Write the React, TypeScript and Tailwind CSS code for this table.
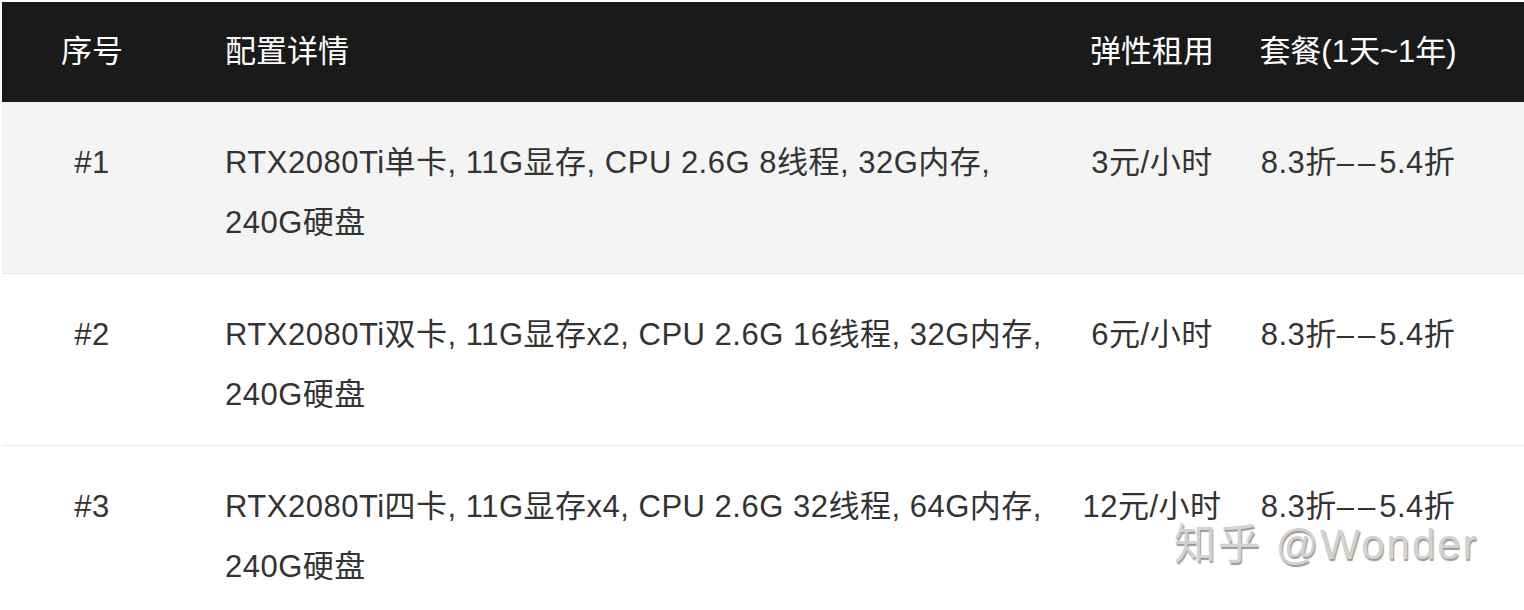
import React from "react";

const rows = [
  {
    id: "#1",
    l1: "RTX2080Ti单卡, 11G显存, CPU 2.6G 8线程, 32G内存,",
    l2: "240G硬盘",
    price: "3元/小时",
    bg: "bg-[#f4f4f4]",
  },
  {
    id: "#2",
    l1: "RTX2080Ti双卡, 11G显存x2, CPU 2.6G 16线程, 32G内存,",
    l2: "240G硬盘",
    price: "6元/小时",
    bg: "bg-white",
  },
  {
    id: "#3",
    l1: "RTX2080Ti四卡, 11G显存x4, CPU 2.6G 32线程, 64G内存,",
    l2: "240G硬盘",
    price: "12元/小时",
    bg: "bg-white",
  },
];

export default function App() {
  return (
    <div
      className="relative w-[1524px] h-[610px] overflow-hidden bg-white pl-[2px] pt-[2px] text-[31px] text-[#333333] tracking-[0.5px]"
      style={{ fontFamily: '"Liberation Sans", "Noto Sans CJK SC", sans-serif' }}
    >
      <div className="grid grid-cols-[180px_880px_180px_282px] h-[100px] items-center bg-[#1a1a1a] text-white tracking-normal">
        <div className="text-center">序号</div>
        <div className="pl-[43px]">配置详情</div>
        <div className="text-center">弹性租用</div>
        <div className="text-center pr-[50px]">套餐(1天~1年)</div>
      </div>
      {rows.map((r) => (
        <div
          key={r.id}
          className={`grid grid-cols-[180px_880px_180px_282px] ${r.bg} border-b border-[#e8e8e8] pt-[31px] pb-[20px] leading-[60px]`}
        >
          <div className="text-center">{r.id}</div>
          <div className="pl-[43px] whitespace-nowrap">
            <div>{r.l1}</div>
            <div>{r.l2}</div>
          </div>
          <div className="text-center whitespace-nowrap">{r.price}</div>
          <div className="text-center pr-[50px] whitespace-nowrap">
            8.3折<span className="tracking-[4px]">––</span>5.4折
          </div>
        </div>
      ))}
      <div className="absolute left-[1174px] top-[520px] text-[42px] leading-[50px] tracking-[2px] text-[#d2d2d2] whitespace-nowrap [text-shadow:1px_2px_1px_rgba(0,0,0,0.4)]">
        知乎 @Wonder
      </div>
    </div>
  );
}
